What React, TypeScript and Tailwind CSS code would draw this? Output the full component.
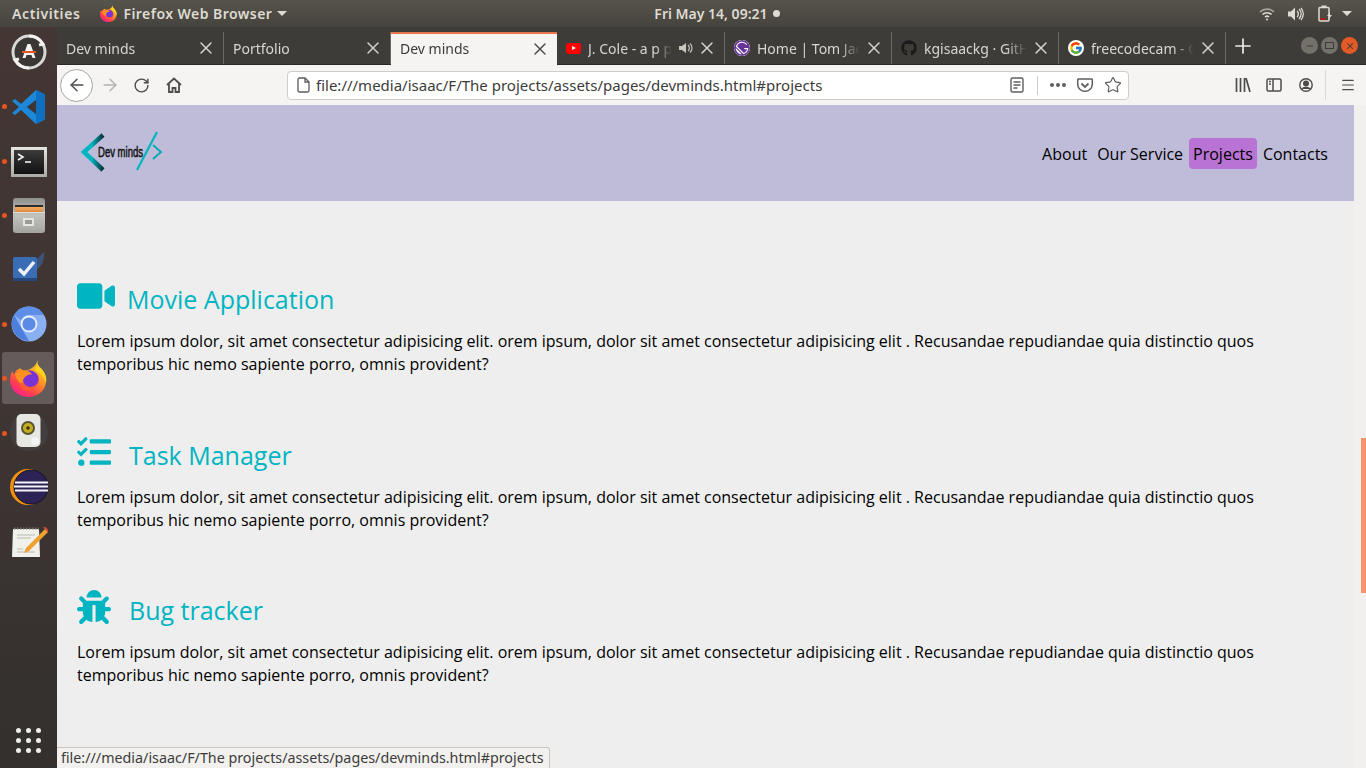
import { ArrowLeft, ArrowRight, RotateCw, Plus, X, Menu, Star, Minus } from "lucide-react";
import { FaVideo, FaTasks, FaBug, FaGithub } from "react-icons/fa";
import { FcGoogle } from "react-icons/fc";
import { SiGatsby } from "react-icons/si";
import React from "react";

const UI_FONT = "font-['Noto_Sans','Open_Sans',sans-serif]";

const FirefoxIcon = ({ size }: { size: number }) => (
  <svg width={size} height={size} viewBox="0 0 36 36">
    <defs>
      <linearGradient id={`ffa${size}`} x1="0.85" y1="0" x2="0.2" y2="1">
        <stop offset="0" stopColor="#ffd92e" />
        <stop offset="0.4" stopColor="#ff9a1f" />
        <stop offset="0.75" stopColor="#ff3f4f" />
        <stop offset="1" stopColor="#f5199b" />
      </linearGradient>
    </defs>
    <path d="M27 0c-1 4 1 6 3 8 4 4 6 9 5 14-1 8-8 14-17 14C8 36 0 29 0 20c0-4 1-7 2-9l2 3c1-3 3-5 6-6 1 1 2 2 4 2 5 0 11-3 13-10z" fill={`url(#ffa${size})`} />
    <path d="M27 0c-1 4 1 6 3 8 4 4 6 9 5 14-2-6-6-10-11-12 2-3 3-6 3-10z" fill="#ffd21f" />
    <circle cx="19" cy="19" r="9" fill="#7a32d6" />
    <path d="M5 13c4-2 9-3 13-2 2 1 3 2 3 3-4 0-7 2-8 5-1 2 0 4 1 5-5-1-8-4-9-11z" fill="#ff8f1f" />
    <path d="M13 20c0 4 4 7 8 6 3 0 5-2 6-5 0 5-4 9-9 9-4 0-7-2-9-5 2 0 3-2 4-5z" fill="#ff5a36" />
  </svg>
);

const Updater = () => (
  <svg width="38" height="38" viewBox="0 0 38 38">
    <circle cx="19" cy="19" r="16" fill="#3a3735" stroke="#d8d8d6" strokeWidth="3" />
    <path d="M19 3a16 16 0 0 1 14 8l-4 1" fill="none" stroke="#f2f2f0" strokeWidth="3" />
    <path d="M19 35a16 16 0 0 1-14-8l4-1" fill="none" stroke="#f2f2f0" strokeWidth="3" />
    <path d="M12.500 25l5-14h3l5 14h-3l-1-3h-5l-1 3z" fill="#f4f4f2" />
    <rect x="12" y="18" width="14" height="2" fill="#e95420" />
  </svg>
);

const VsCode = () => (
  <svg width="36" height="36" viewBox="0 0 36 36">
    <path d="M25 1l9 4.500v25l-9 4.500L10 21l-6 5-3-2 7-6-7-6 3-2 6 5z" fill="#1e88d8" />
    <path d="M25 1l9 4.500v25l-9 4.500V25l-10-7 10-7z" fill="#0f6fc0" />
    <path d="M25 11v14l-9-7z" fill="#3e3533" />
  </svg>
);

const TerminalIcon = () => (
  <div className="w-[36px] h-[30px] mt-[3px] bg-gradient-to-b from-[#e4e4e0] to-[#a9a9a5] p-[3px]">
    <div className="w-full h-full bg-gradient-to-b from-[#3b3b3b] to-[#111111] pl-[3px] pt-[3px]">
      <svg width="16" height="12" viewBox="0 0 16 12" fill="none" stroke="#f3f3f3" strokeWidth="1.600">
        <path d="M1 1l5 3-5 3" />
        <path d="M8 9h6" />
      </svg>
    </div>
  </div>
);

const FilesIcon = () => (
  <div className="w-[32px] h-[35px] rounded-[3px] bg-gradient-to-b from-[#8f8f8b] via-[#c2c2be] to-[#a3a39f] flex flex-col items-center pt-[7px]">
    <div className="w-[28px] h-[7px] bg-gradient-to-b from-[#f2b069] to-[#e08a3e] border-t-[2px] border-[#2f2b28]" />
    <div className="w-full h-px bg-[#dededa]" />
    <div className="w-[11px] h-[8px] mt-[5px] border-[2px] border-[#e5e5e3] bg-[#9b9b97]" />
  </div>
);

const TasksIcon = () => (
  <svg width="38" height="36" viewBox="0 0 38 36">
    <path d="M34 0L22 12l4 6c6-4 9-10 8-18z" fill="#3d5f97" opacity="0.7" />
    <rect x="3" y="5" width="24" height="24" rx="2" fill="#3a6db4" />
    <rect x="3" y="26" width="24" height="3" fill="#24487d" />
    <path d="M9 17l5 5L24 10" fill="none" stroke="#eef2f7" strokeWidth="3.500" />
  </svg>
);

const ChromiumIcon = () => (
  <svg width="36" height="36" viewBox="0 0 36 36">
    <circle cx="18" cy="18" r="17.500" fill="#8ab0f4" />
    <path d="M3 9a17.500 17.500 0 0 1 30 0H18a9 9 0 0 0-8 5z" fill="#5d8fe8" />
    <path d="M3 9l8 14 7 12A17.500 17.500 0 0 1 3 9z" fill="#4d7fdf" />
    <circle cx="18" cy="18" r="7.500" fill="#5a8be5" stroke="#e9f0fd" strokeWidth="1.800" />
  </svg>
);

const SpeakerIcon = () => (
  <svg width="42" height="40" viewBox="0 0 42 40">
    <circle cx="21" cy="19" r="19" fill="#4a4a50" opacity="0.45" />
    <rect x="8.500" y="1" width="24" height="33" rx="5" fill="#e6e6e2" />
    <circle cx="20" cy="15" r="7" fill="#5a5434" />
    <circle cx="20" cy="15" r="5" fill="#c3ac1f" />
    <circle cx="20" cy="15" r="1.800" fill="#383214" />
    <circle cx="27" cy="28" r="4" fill="#f4f4f2" />
  </svg>
);

const EclipseIcon = () => (
  <svg width="38" height="36" viewBox="0 0 38 36">
    <circle cx="18" cy="18" r="18" fill="#f29111" />
    <circle cx="21" cy="18" r="17" fill="#2c2255" stroke="#141226" strokeWidth="1" />
    <rect x="5" y="12.500" width="33" height="2" fill="#f4f3f8" />
    <rect x="4" y="16.500" width="34" height="2" fill="#f4f3f8" />
    <rect x="5" y="20.500" width="33" height="2" fill="#f4f3f8" />
  </svg>
);

const NotesIcon = () => (
  <svg width="38" height="32" viewBox="0 0 38 32">
    <path d="M3 3h26l1 28H2z" fill="#f1f1ec" />
    <path d="M4 2.500h25" stroke="#77736c" strokeWidth="2" strokeDasharray="1.500 1.500" />
    <path d="M7 9h18M7 12h14M7 23h6M7 26h18" stroke="#b9b9b4" strokeWidth="1" />
    <path d="M35 3l3 3L19 25l-5 2 2-5z" fill="#f0a030" />
    <path d="M33 1.500l4.500 4.500 1-2-3-3z" fill="#d84a3a" />
  </svg>
);

const dockApps = [
  { id: "updater", icon: <Updater />, running: false },
  { id: "vscode", icon: <VsCode />, running: true },
  { id: "terminal", icon: <TerminalIcon />, running: true },
  { id: "files", icon: <FilesIcon />, running: true },
  { id: "tasks", icon: <TasksIcon />, running: false },
  { id: "chromium", icon: <ChromiumIcon />, running: true },
  { id: "firefox", icon: <FirefoxIcon size={37} />, running: true, active: true },
  { id: "speaker", icon: <SpeakerIcon />, running: true },
  { id: "eclipse", icon: <EclipseIcon />, running: false },
  { id: "notes", icon: <NotesIcon />, running: false },
];

const Dock = () => (
  <aside className="w-[57px] shrink-0 flex flex-col items-center bg-gradient-to-b from-[#433633] via-[#3f3533] to-[#33302e]">
    <div className="-mt-[2px] w-full">
      {dockApps.map((app) => (
        <div key={app.id} className="relative h-[54.4px] flex items-center justify-center">
          {app.active && <div className="absolute left-[2px] top-[1px] w-[52px] h-[52px] rounded-[3px] bg-[#645c5a]" />}
          {app.running && <span className="absolute left-[2px] top-[25px] w-[5px] h-[5px] rounded-full bg-[#e95420]" />}
          <div className="relative">{app.icon}</div>
        </div>
      ))}
    </div>
    <div className="mt-auto mb-[15px] grid grid-cols-3 gap-x-[5px] gap-y-[5px]">
      {Array.from({ length: 9 }).map((_, i) => (
        <span key={i} className="w-[5px] h-[5px] rounded-full bg-[#eeeeec]" />
      ))}
    </div>
  </aside>
);

const TopBar = () => (
  <header className={`h-[27px] shrink-0 flex items-center bg-gradient-to-b from-[#57544c] to-[#45433d] text-[#dedbd2] text-[14px] font-semibold ${UI_FONT}`}>
    <span className="ml-[12px] tracking-[0.6px]">Activities</span>
    <span className="ml-[20px] flex"><FirefoxIcon size={17} /></span>
    <span className="ml-[6px] tracking-[0.45px]">Firefox Web Browser</span>
    <span className="ml-[5px] w-0 h-0 border-x-[5px] border-x-transparent border-t-[5px] border-t-[#dedbd2]" />
    <span className="ml-[367px]">Fri May 14, 09:21</span>
    <span className="ml-[5px] w-[7px] h-[7px] rounded-full bg-[#dedbd2]" />
    <div className="ml-auto flex items-center mr-[14px]">
      <svg width="16" height="14" viewBox="0 0 16 14" fill="none" stroke="#dedbd2" strokeWidth="1.600">
        <path d="M1 5a10 10 0 0 1 14 0" opacity="0.6" />
        <path d="M3.500 7.500a6.500 6.500 0 0 1 9 0" />
        <path d="M6 10a3 3 0 0 1 4 0" />
        <circle cx="8" cy="12.500" r="1" fill="#dedbd2" stroke="none" />
      </svg>
      <svg className="ml-[13px]" width="16" height="14" viewBox="0 0 16 14" fill="#dedbd2">
        <path d="M0 4.500h3l4-4v13l-4-4H0z" />
        <path d="M9 4a4 4 0 0 1 0 6M11 2a7 7 0 0 1 0 10M13 1a9 9 0 0 1 0 12" fill="none" stroke="#dedbd2" strokeWidth="1.300" />
      </svg>
      <svg className="ml-[14px]" width="15" height="17" viewBox="0 0 15 17" fill="none">
        <rect x="1" y="2.500" width="10" height="13.500" rx="1" stroke="#dedbd2" strokeWidth="1.500" />
        <rect x="3.500" y="0.500" width="5" height="2" fill="#dedbd2" />
        <rect x="3" y="13" width="4" height="2" fill="#d10a0a" />
        <path d="M12 7l-3 4h2l-1 4 4-5h-2z" fill="#dedbd2" />
      </svg>
      <span className="ml-[9px] w-0 h-0 border-x-[5px] border-x-transparent border-t-[5px] border-t-[#dedbd2]" />
    </div>
  </header>
);

const YoutubeIcon = () => (
  <span className="w-[15px] h-[11px] rounded-[3px] bg-[#ff0000] flex items-center justify-center">
    <span className="w-0 h-0 border-y-[2.500px] border-y-transparent border-l-[4px] border-l-white" />
  </span>
);

const tabs = [
  { title: "Dev minds", width: 167 },
  { title: "Portfolio", width: 167 },
  { title: "Dev minds", width: 166, active: true },
  { title: "J. Cole - a p p", width: 168, icon: <YoutubeIcon />, sound: true },
  { title: "Home | Tom Jackson", width: 167, icon: <SiGatsby size={16} className="text-[#663399] bg-white rounded-full" /> },
  { title: "kgisaackg · GitHub", width: 167, icon: <FaGithub size={16} className="text-[#1b1b1b]" /> },
  { title: "freecodecam - Google", width: 167, icon: <span className="w-[16px] h-[16px] rounded-full bg-white flex items-center justify-center"><FcGoogle size={14} /></span> },
];

const TabStrip = () => (
  <div className={`h-[38px] shrink-0 flex bg-[#3e3c38] border-b border-[#2c2a27] text-[14px] ${UI_FONT}`}>
    {tabs.map((tab, i) => (
      <div
        key={i}
        style={{ width: tab.width }}
        className={
          tab.active
            ? "relative flex items-center shrink-0 mt-[5px] pl-[9px] pr-[10px] pb-[2px] gap-[7px] bg-[#f5f4f2] text-[#3a3a38] border-t-[2px] border-[#e9734a] -mb-px"
            : "relative flex items-center shrink-0 mt-[5px] pl-[9px] pr-[11px] gap-[7px] text-[#d8d6cf] after:content-[''] after:absolute after:right-0 after:top-0 after:bottom-0 after:w-px after:bg-[#6b6964]"
        }
      >
        {tab.icon}
        <span className="flex-1 min-w-0 whitespace-nowrap overflow-hidden [mask-image:linear-gradient(to_right,#000_80%,transparent)]">
          {tab.title}
        </span>
        {tab.sound && (
          <svg width="14" height="12" viewBox="0 0 14 12" fill="#c9c7c0">
            <path d="M0 4h3l4-3v10L3 8H0z" />
            <path d="M9 3a4 4 0 0 1 0 6M11 1.500a6 6 0 0 1 0 9" fill="none" stroke="#c9c7c0" strokeWidth="1.200" />
          </svg>
        )}
        <X size={20} strokeWidth={1.700} className={tab.active ? "-mx-[3px] text-[#4a4a48]" : "-mx-[3px] text-[#d8d6cf]"} />
      </div>
    ))}
    <div className="w-[34px] flex items-center justify-center text-[#eeece6]">
      <Plus size={24} strokeWidth={1.700} />
    </div>
    <div className="ml-auto mr-[8px] flex items-center gap-[3px]">
      <span className="w-[17px] h-[17px] rounded-full bg-[#73716a] flex items-center justify-center"><Minus size={10} className="text-[#3e3c38]" strokeWidth={2.500} /></span>
      <span className="w-[17px] h-[17px] rounded-full bg-[#73716a] flex items-center justify-center"><span className="w-[9px] h-[7px] border border-[#3e3c38]" /></span>
      <span className="w-[17px] h-[17px] rounded-full bg-[#e25a26] flex items-center justify-center"><X size={10} className="text-[#3e3c38]" strokeWidth={2.500} /></span>
    </div>
  </div>
);

const Toolbar = () => (
  <div className={`h-[40px] shrink-0 flex items-center bg-[#f5f4f2] pl-[3px] ${UI_FONT}`}>
    <span className="w-[33px] h-[33px] rounded-full bg-white border border-[#a8a6a2] flex items-center justify-center">
      <ArrowLeft size={20} strokeWidth={1.700} className="text-[#4c4c4a]" />
    </span>
    <ArrowRight size={20} strokeWidth={1.700} className="ml-[7px] text-[#b3b2b0]" />
    <RotateCw size={17} strokeWidth={2} className="ml-[13px] text-[#4c4c4a]" />
    <svg className="ml-[16px]" width="16" height="16" viewBox="0 0 16 16" fill="none" stroke="#4c4c4a" strokeWidth="1.800">
      <path d="M1 8l7-6.500L15 8" />
      <path d="M3 7v8h3.500v-4h3v4H13V7" />
    </svg>
    <div className="ml-[105px] w-[842px] h-[29px] flex items-center rounded-[4px] bg-white border border-[#cfcdc9] pl-[9px] pr-[6px]">
      <svg width="13" height="16" viewBox="0 0 13 16" fill="none" stroke="#5b5b59" strokeWidth="1.300">
        <path d="M1 2.500a1.500 1.500 0 0 1 1.500-1.500H8l4 4v8.500a1.500 1.500 0 0 1-1.500 1.500h-8A1.500 1.500 0 0 1 1 13.500z" />
        <path d="M8 1v4h4" />
      </svg>
      <span className="ml-[6px] text-[15px] text-[#3c3c3a] whitespace-nowrap">file:///media/isaac/F/The projects/assets/pages/devminds.html#projects</span>
      <div className="ml-auto flex items-center">
        <svg width="14" height="16" viewBox="0 0 14 16" fill="none" stroke="#5f5f5d" strokeWidth="1.400">
          <rect x="1" y="1" width="12" height="14" rx="1.500" />
          <path d="M3.500 5h7M3.500 8h7M3.500 11h4" />
        </svg>
        <span className="ml-[13px] w-px h-[19px] bg-[#cfcdc9]" />
        <span className="ml-[12px] flex gap-[2px]">
          <span className="w-[4px] h-[4px] rounded-full bg-[#5f5f5d]" />
          <span className="w-[4px] h-[4px] rounded-full bg-[#5f5f5d]" />
          <span className="w-[4px] h-[4px] rounded-full bg-[#5f5f5d]" />
        </span>
        <svg className="ml-[11px]" width="16" height="15" viewBox="0 0 16 15" fill="none" stroke="#5f5f5d" strokeWidth="1.500">
          <path d="M1.500 1h13a.800.800 0 0 1 .800.800V6a7.300 7.300 0 0 1-14.600 0V1.800a.800.800 0 0 1 .800-.800z" />
          <path d="M4.500 5.500L8 9l3.500-3.500" strokeWidth="1.800" />
        </svg>
        <Star size={18} strokeWidth={1.600} className="ml-[11px] text-[#5f5f5d]" />
      </div>
    </div>
    <svg className="ml-[106px]" width="16" height="14" viewBox="0 0 16 14" fill="none" stroke="#4c4c4a" strokeWidth="1.700">
      <path d="M1.500 0v14M5.500 0v14M9.500 0v14M11 0l4 14" />
    </svg>
    <svg className="ml-[15px]" width="16" height="14" viewBox="0 0 16 14" fill="none" stroke="#4c4c4a" strokeWidth="1.500">
      <rect x="1" y="1" width="14" height="12" rx="1.500" />
      <path d="M7 1v12" />
      <path d="M3 3.500h2M3 6h2" />
    </svg>
    <svg className="ml-[17px]" width="14" height="14" viewBox="0 0 14 14" fill="none" stroke="#4c4c4a" strokeWidth="1.400">
      <circle cx="7" cy="7" r="6.200" />
      <circle cx="7" cy="5.500" r="2.300" fill="#4c4c4a" />
      <path d="M3 11c1-2 7-2 8 0" fill="#4c4c4a" />
    </svg>
    <span className="ml-[12px] w-px h-[30px] bg-[#dad8d4]" />
    <Menu size={16} strokeWidth={1.800} className="ml-[14px] text-[#4c4c4a]" />
  </div>
);

const Logo = () => (
  <svg width="84" height="42" viewBox="0 0 84 42">
    <defs>
      <linearGradient id="logoArm" x1="0" y1="0" x2="1" y2="0">
        <stop offset="0.4" stopColor="#00b5c0" />
        <stop offset="1" stopColor="#083338" />
      </linearGradient>
    </defs>
    <path d="M23 4L4 21l19 18" fill="none" stroke="url(#logoArm)" strokeWidth="4.500" />
    <path d="M77 1L57 39" stroke="#00b5c0" strokeWidth="2.200" />
    <path d="M73 14l8 7-8 7" fill="none" stroke="#00a9b4" strokeWidth="1.800" />
    <text x="18" y="26" fontFamily="'Liberation Sans Narrow','Liberation Sans',sans-serif" fontSize="14" fontWeight="400" stroke="#111111" strokeWidth="0.500" fill="#111111" textLength="45" lengthAdjust="spacingAndGlyphs">
      Dev minds
    </text>
  </svg>
);

const navItems = ["About", "Our Service", "Projects", "Contacts"];

const LOREM =
  "Lorem ipsum dolor, sit amet consectetur adipisicing elit. orem ipsum, dolor sit amet consectetur adipisicing elit . Recusandae repudiandae quia distinctio quos temporibus hic nemo sapiente porro, omnis provident?";

const projects = [
  { title: "Movie Application", icon: <FaVideo size={38} />, gap: "ml-[12px]", iconW: "w-[38px]" },
  { title: "Task Manager", icon: <FaTasks size={34} />, gap: "ml-[18px]", iconW: "w-[34px]" },
  { title: "Bug tracker", icon: <FaBug size={34} />, gap: "ml-[18px]", iconW: "w-[34px]" },
];

const Page = () => (
  <div className="flex-1 min-h-0 flex font-['Open_Sans',sans-serif] text-[16px] text-black">
    <main className="flex-1 min-w-0 bg-[#eeeeee] relative overflow-hidden">
      <div className="h-[96px] bg-[#bebcd9] flex items-start pl-[23px] pr-[22px]">
        <div className="mt-[26px]"><Logo /></div>
        <nav className="ml-auto mt-[33px] flex gap-[2px]">
          {navItems.map((item) => (
            <a key={item} className={item === "Projects" ? "px-[4px] h-[31px] leading-[32px] rounded-[4px] bg-[#b873d4]" : "px-[4px] h-[31px] leading-[32px]"}>
              {item}
            </a>
          ))}
        </nav>
      </div>
      <div className="pl-[20px] pr-[95px] pt-[77px]">
        {projects.map((p) => (
          <section key={p.title} className="h-[155.500px]">
            <div className="flex items-center h-[44px] text-[#00b5c1]">
              <span className={`${p.iconW} flex -mt-[8px]`}>{p.icon}</span>
              <h2 className={`${p.gap} text-[25px] leading-[44px] -mt-[2px]`}>{p.title}</h2>
            </div>
            <p className="mt-[8px] leading-[23px]">{LOREM}</p>
          </section>
        ))}
      </div>
      <div className={`absolute left-0 bottom-0 h-[21px] pl-[4px] pr-[5px] bg-[#f2f1ef] border-t border-r border-[#c8c6c2] rounded-tr-[3px] text-[14.300px] leading-[20px] text-[#3c3c3a] ${UI_FONT}`}>
        file:///media/isaac/F/The projects/assets/pages/devminds.html#projects
      </div>
    </main>
    <div className="w-[12px] shrink-0 bg-[#f1f0ee] pl-[7px] pt-[333px]">
      <div className="w-[5px] h-[155px] bg-[#f4936c]" />
    </div>
  </div>
);

export default function App() {
  return (
    <div className="w-[1366px] h-[768px] overflow-hidden flex flex-col bg-[#3e3c38]">
      <TopBar />
      <div className="flex-1 min-h-0 flex">
        <Dock />
        <div className="flex-1 min-w-0 flex flex-col">
          <TabStrip />
          <Toolbar />
          <Page />
        </div>
      </div>
    </div>
  );
}
